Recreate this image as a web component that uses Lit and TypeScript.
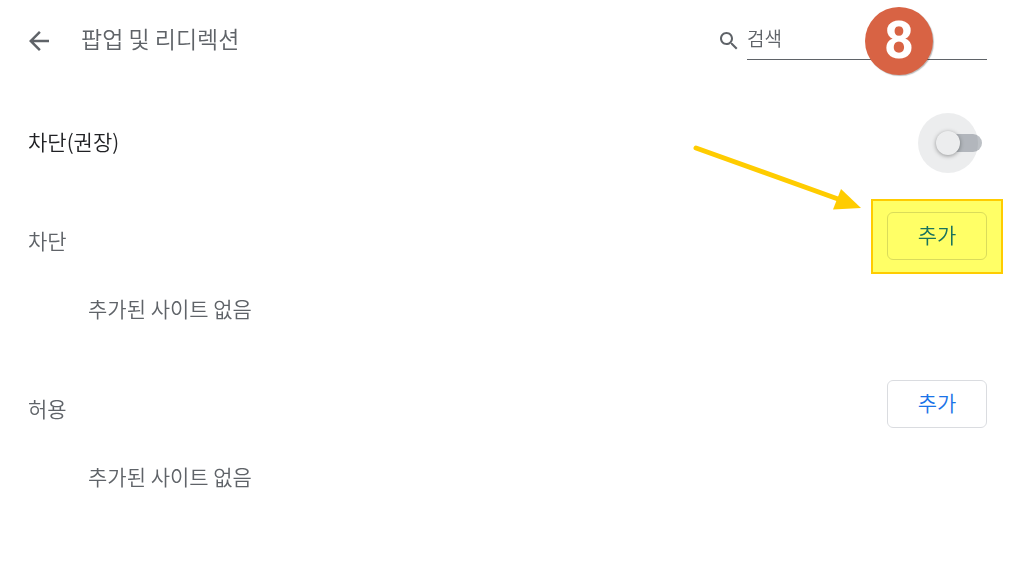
import { LitElement, html, css } from "lit";
import { customElement, property } from "lit/decorators.js";

@customElement("site-section")
class SiteSection extends LitElement {
  @property() heading = "";
  @property({ type: Boolean }) marked = false;

  static styles = css`
    :host {
      display: block;
      height: 168px;
      color: #5f6368;
    }
    .head {
      display: flex;
      align-items: center;
      justify-content: space-between;
      height: 72px;
    }
    h2 {
      margin: 0;
      padding-top: 8px;
      font-size: 21px;
      font-weight: inherit;
      line-height: 32px;
    }
    .action {
      position: relative;
      display: flex;
    }
    button {
      box-sizing: border-box;
      width: 100px;
      height: 48px;
      padding: 0 0 4px;
      border: 1px solid #dadce0;
      border-radius: 6px;
      background: #fff;
      color: #1a73e8;
      font: inherit;
      font-size: 21px;
      line-height: 32px;
      cursor: pointer;
    }
    .mark {
      position: absolute;
      inset: -13px -16px -14px;
      border: 2px solid #fc0;
      background: #ff6;
      mix-blend-mode: multiply;
      pointer-events: none;
    }
    .arrow {
      position: absolute;
      right: 125px;
      top: -68px;
      width: 170px;
      height: 70px;
      pointer-events: none;
    }
    p {
      margin: 0;
      padding-left: 60px;
      font-size: 21px;
      line-height: 72px;
    }
  `;

  render() {
    return html`
      <div class="head">
        <h2>${this.heading}</h2>
        <div class="action">
          <button aria-label="${this.heading} 추가">추가</button>
          ${this.marked
            ? html`<div class="mark"></div>
                <svg class="arrow" viewBox="0 0 170 70" aria-hidden="true">
                  <path d="M4 4 146 55" stroke="#fc0" stroke-width="5" stroke-linecap="round" />
                  <path d="M149 45 169 64 141 65.500Z" fill="#fc0" />
                </svg>`
            : null}
        </div>
      </div>
      <p>추가된 사이트 없음</p>
    `;
  }
}

@customElement("app-root")
class AppRoot extends LitElement {
  static styles = css`
    :host {
      display: block;
      min-height: 100vh;
      box-sizing: border-box;
      padding: 0 25px 0 28px;
      background: #fff;
      color: #202124;
      font-family: "Noto Sans CJK KR", sans-serif;
      font-weight: 350;
    }
    header {
      display: flex;
      align-items: center;
      justify-content: space-between;
      height: 82px;
      color: #5f6368;
    }
    .title {
      display: flex;
      align-items: center;
      gap: 27px;
    }
    .back {
      display: flex;
      margin-left: -4px;
      padding: 0;
      border: 0;
      background: none;
      color: inherit;
      cursor: pointer;
    }
    svg {
      fill: currentColor;
    }
    h1 {
      margin: 0;
      padding-bottom: 6px;
      font-size: 23px;
      font-weight: inherit;
      line-height: 32px;
    }
    .search {
      position: relative;
      display: flex;
      align-items: center;
      gap: 6px;
    }
    .search input {
      box-sizing: border-box;
      width: 240px;
      height: 38px;
      padding: 0 0 6px;
      border: 0;
      border-bottom: 1px solid #5f6368;
      outline: 0;
      background: none;
      color: inherit;
      font: inherit;
      font-size: 19px;
    }
    .search input::placeholder {
      color: #5f6368;
      opacity: 1;
    }
    .badge {
      position: absolute;
      right: 54px;
      top: -15px;
      width: 68px;
      height: 68px;
      border-radius: 50%;
      background: #d86344;
      box-shadow: 1px 1px 1px #0004;
      color: #fff;
      font: 700 52px/67px Roboto, sans-serif;
      text-align: center;
    }
    .setting {
      display: flex;
      align-items: center;
      justify-content: space-between;
      height: 118px;
      padding-right: 5px;
      font-size: 21px;
      line-height: 32px;
    }
    .toggle {
      appearance: none;
      position: relative;
      width: 42px;
      height: 18px;
      margin: 4px 0 0;
      border-radius: 9px;
      background: #bdc1c6;
      cursor: pointer;
    }
    .toggle::before,
    .toggle::after {
      content: "";
      position: absolute;
      border-radius: 50%;
    }
    .toggle::before {
      left: -4px;
      top: -3px;
      width: 24px;
      height: 24px;
      background: #fff;
      box-shadow: 0 1px 4px #0006;
    }
    .toggle::after {
      left: -22px;
      top: -21px;
      width: 60px;
      height: 60px;
      background: #6469761f;
    }
  `;

  render() {
    return html`
      <header>
        <div class="title">
          <button class="back" aria-label="뒤로">
            <svg width="30" height="30" viewBox="0 0 24 24">
              <path d="M20 11H7.830l5.590-5.590L12 4l-8 8 8 8 1.410-1.410L7.830 13H20v-2z" />
            </svg>
          </button>
          <h1>팝업 및 리디렉션</h1>
        </div>
        <div class="search">
          <svg width="24" height="24" viewBox="0 0 24 24" aria-hidden="true">
            <path
              d="M15.500 14h-.79l-.28-.27C15.410 12.590 16 11.110 16 9.500 16 5.910 13.090 3 9.500 3S3 5.910 3 9.500 5.910 16 9.500 16c1.610 0 3.090-.59 4.230-1.570l.27.28v.79l5 4.990L20.490 19l-4.990-5zm-6 0C7.010 14 5 11.990 5 9.500S7.010 5 9.500 5 14 7.010 14 9.500 11.990 14 9.500 14z"
            />
          </svg>
          <input type="text" placeholder="검색" aria-label="검색" />
          <div class="badge">8</div>
        </div>
      </header>
      <main>
        <div class="setting">
          <label for="block">차단(권장)</label>
          <input class="toggle" id="block" type="checkbox" role="switch" />
        </div>
        <site-section heading="차단" marked></site-section>
        <site-section heading="허용"></site-section>
      </main>
    `;
  }
}
